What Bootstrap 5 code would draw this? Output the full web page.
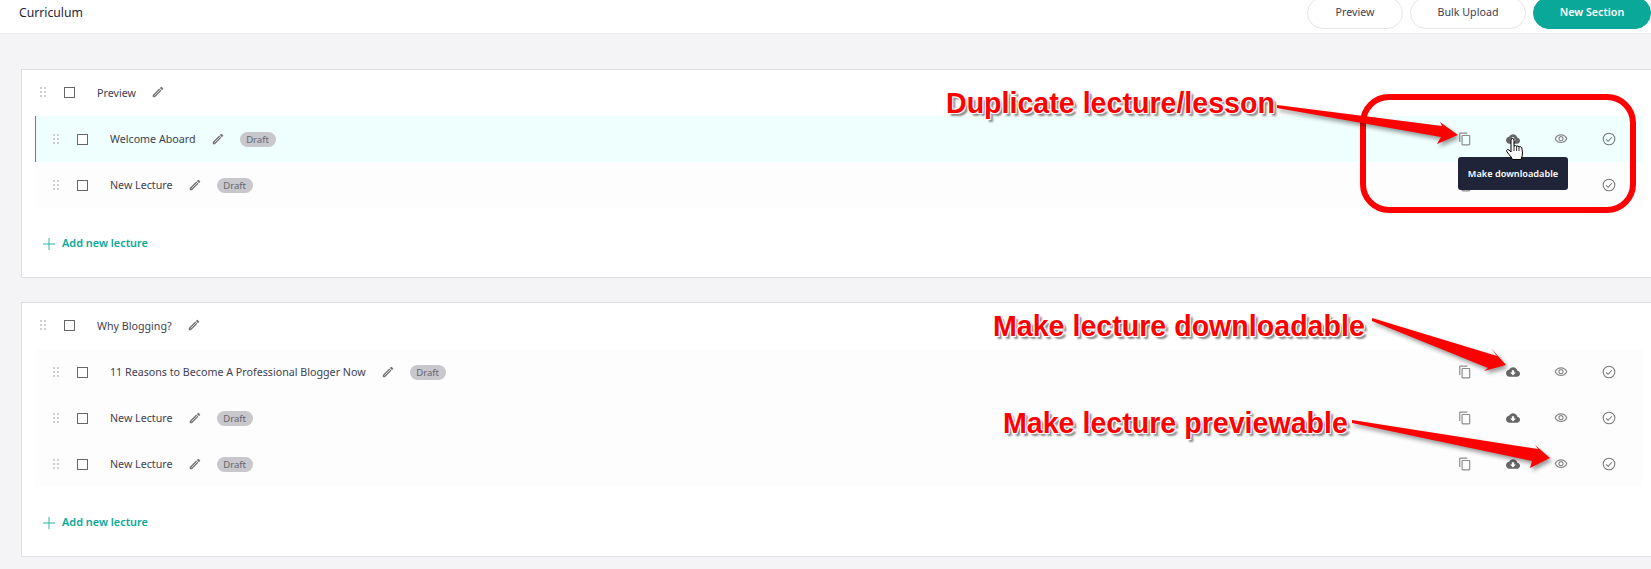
<!DOCTYPE html>
<html lang="en">
<head>
    <meta charset="UTF-8">
    <meta name="viewport" content="width=device-width, initial-scale=1.0">
    <title>Curriculum</title>
    <!-- Bootstrap CSS -->
    <link href="https://cdn.jsdelivr.net/npm/bootstrap@5.3.0/dist/css/bootstrap.min.css" rel="stylesheet">
    <style>
        html, body {
            height: 569px;
            overflow: hidden;
        }
        body {
            position: relative;
            background-color: #f4f4f6;
            font-family: "Noto Sans", "Open Sans", sans-serif;
            font-size: 10.7px;
            color: #3d4152;
        }
        .top-bar {
            height: 42px;
            margin-top: -8px;
            padding-left: 19px;
            background: #fff;
            border-bottom: 1px solid #ececee;
        }
        .top-title {
            font-size: 12.2px;
            color: #23263a;
            padding-top: 1px;
        }
        .top-btns {
            column-gap: 7px;
        }
        .top-btn {
            height: 32px;
            padding: 0;
            font-size: 10.7px;
            color: #3d4152;
            background: #fff;
            border: 1px solid #e8e6e8;
        }
        .btn-preview { width: 96px; }
        .btn-bulk { width: 116px; }
        .btn-section {
            width: 118px;
            font-weight: 600;
            color: #fff;
            background: #0aa899;
            border-color: #0aa899;
        }
        .curr-list {
            padding-top: 35px;
        }
        .curr-card {
            margin: 0 -6px 24px 21px;
            padding: 0 13px;
            border: 1px solid #dfdfe1;
            border-radius: 0;
            background: #fff;
        }
        .sec-head {
            height: 46px;
            padding: 0 0 2px 5px;
        }
        .sec-name {
            padding-top: 2px;
        }
        .lec-row {
            height: 46px;
            padding-left: 17px;
            background: #fdfdfd;
            border-left: 1px solid transparent;
        }
        .lec-row.is-active {
            background: #eefffd;
            border-left-color: #0aa899;
        }
        .grip {
            width: 6px;
            height: 10px;
            margin-right: 18px;
            flex: none;
        }
        .pick {
            width: 11px;
            height: 11px;
            margin: 0 22px 0 0;
            flex: none;
            border: 1px solid #666;
            border-radius: 0 !important;
            background-color: #fff;
        }
        .pen {
            width: 14px;
            height: 14px;
            margin-left: 15px;
            flex: none;
        }
        .draft-tag {
            width: 36px;
            height: 15px;
            margin-left: 15px;
            line-height: 15px;
            text-align: center;
            font-size: 9.5px;
            color: #65666f;
            background: #c7c7cc;
            border-radius: 8px;
        }
        .act-slot {
            width: 48px;
            height: 14px;
            position: relative;
            display: flex;
            justify-content: center;
            align-items: center;
        }
        .act-slot svg {
            width: 14px;
            height: 14px;
        }
        .act-wrap {
            margin-left: auto;
            padding-right: 10px;
        }
        .add-lec {
            height: 69px;
            padding: 2px 0 0 8px;
            font-size: 10.9px;
            font-weight: 600;
            color: #0aa899;
        }
        .add-lec svg {
            width: 12px;
            height: 12px;
            margin-right: 7px;
        }
        .dl-tip {
            position: absolute;
            top: 25px;
            left: -31px;
            width: 110px;
            height: 33px;
            line-height: 33px;
            text-align: center;
            font-size: 9.2px;
            font-weight: 600;
            color: #fff;
            background: #1f2438;
            border-radius: 3px;
            z-index: 5;
        }
        .hand {
            position: absolute;
            top: 6px;
            left: 17px;
            width: 17px !important;
            height: 22px !important;
            z-index: 6;
        }
        .note-layer {
            position: absolute;
            top: 0;
            left: 0;
            z-index: 8;
            filter: drop-shadow(2px 3px 2px rgba(0, 0, 0, .4));
        }
        .note-box {
            position: absolute;
            top: 0;
            left: 0;
            z-index: 7;
        }
        .note-text {
            position: absolute;
            z-index: 9;
            white-space: nowrap;
            font-family: "Liberation Sans", Arial, sans-serif;
            font-weight: 700;
            font-size: 28.6px;
            line-height: 30px;
            color: #f00;
            text-shadow: -1px -1px 0 #fff, 1px -1px 0 #fff, -1px 1px 0 #fff, 1px 1px 0 #fff, 3px 3px 2px #888;
        }
        .note-dup { top: 88px; left: 946px; }
        .note-dl { top: 311px; left: 993px; }
        .note-prev { top: 408px; left: 1003px; }
    </style>
</head>
<body>

<!-- Shared icons -->
<svg width="0" height="0" class="d-block position-absolute">
    <symbol id="i-grip" viewBox="0 0 6 10">
        <g fill="#cfcfd2">
            <rect x="0" y="0" width="2" height="2"/><rect x="4" y="0" width="2" height="2"/>
            <rect x="0" y="4" width="2" height="2"/><rect x="4" y="4" width="2" height="2"/>
            <rect x="0" y="8" width="2" height="2"/><rect x="4" y="8" width="2" height="2"/>
        </g>
    </symbol>
    <symbol id="i-pen" viewBox="0 0 24 24">
        <path d="M3 17.25V21h3.75L17.81 9.94l-3.75-3.75L3 17.25zM20.71 7.04a1 1 0 0 0 0-1.41l-2.34-2.34a1 1 0 0 0-1.41 0l-1.83 1.83 3.75 3.75 1.83-1.83z" fill="#777"/>
        <path d="M6 18 15.5 8.5" stroke="#ddd" stroke-width="1.6"/>
    </symbol>
    <symbol id="i-copy" viewBox="0 0 24 24">
        <path d="M16 1H4c-1.1 0-2 .9-2 2v14h2V3h12V1zm3 4H8c-1.1 0-2 .9-2 2v14c0 1.1.9 2 2 2h11c1.1 0 2-.9 2-2V7c0-1.1-.9-2-2-2zm0 16H8V7h11v14z" fill="#8c8c8c"/>
    </symbol>
    <symbol id="i-cloud" viewBox="0 0 24 24">
        <path d="M19.35 10.04C18.67 6.59 15.64 4 12 4 9.11 4 6.6 5.64 5.35 8.04 2.34 8.36 0 10.91 0 14c0 3.31 2.69 6 6 6h13c2.76 0 5-2.24 5-5 0-2.64-2.05-4.78-4.65-4.96zM17 13l-5 5-5-5h3V9h4v4h3z" fill="#666"/>
    </symbol>
    <symbol id="i-eye" viewBox="0 0 24 24">
        <path d="M12 6c3.79 0 7.17 2.13 8.82 5.5C19.17 14.87 15.79 17 12 17s-7.17-2.13-8.82-5.5C4.83 8.13 8.21 6 12 6m0-2C7 4 2.73 7.11 1 11.5 2.73 15.89 7 19 12 19s9.27-3.11 11-7.5C21.27 7.11 17 4 12 4zm0 5c1.38 0 2.5 1.12 2.5 2.5S13.38 14 12 14s-2.5-1.12-2.5-2.5S10.62 9 12 9m0-2c-2.48 0-4.5 2.02-4.5 4.5S9.52 16 12 16s4.5-2.02 4.5-4.5S14.48 7 12 7z" fill="#888"/>
    </symbol>
    <symbol id="i-check" viewBox="0 0 24 24">
        <circle cx="12" cy="12" r="10" fill="none" stroke="#777" stroke-width="1.8"/>
        <path d="M7 12.5l3.5 3.5L17 9" fill="none" stroke="#777" stroke-width="1.8"/>
    </symbol>
    <symbol id="i-plus" viewBox="0 0 12 12">
        <path d="M6 0v12M0 6h12" stroke="#2bb8ab" stroke-width="1"/>
    </symbol>
</svg>

<!-- Top bar -->
<div class="top-bar d-flex justify-content-between align-items-center">
    <div class="top-title">Curriculum</div>
    <div class="d-flex top-btns">
        <button class="btn rounded-pill top-btn btn-preview" type="button">Preview</button>
        <button class="btn rounded-pill top-btn btn-bulk" type="button">Bulk Upload</button>
        <button class="btn rounded-pill top-btn btn-section" type="button">New Section</button>
    </div>
</div>

<div class="curr-list">

    <!-- Section 1 -->
    <div class="card curr-card">
        <div class="sec-head d-flex align-items-center">
            <svg class="grip"><use href="#i-grip"/></svg>
            <input class="form-check-input pick" type="checkbox">
            <span class="sec-name">Preview</span>
            <svg class="pen"><use href="#i-pen"/></svg>
        </div>

        <div class="lec-row is-active d-flex align-items-center">
            <svg class="grip"><use href="#i-grip"/></svg>
            <input class="form-check-input pick" type="checkbox">
            <span>Welcome Aboard</span>
            <svg class="pen"><use href="#i-pen"/></svg>
            <span class="draft-tag">Draft</span>
            <div class="act-wrap d-flex">
                <div class="act-slot"><svg><use href="#i-copy"/></svg></div>
                <div class="act-slot">
                    <svg><use href="#i-cloud"/></svg>
                    <svg class="hand" viewBox="0 0 17 22">
                        <path d="M5 13V2.2Q5 .5 6.5 .5T8 2.2V8Q9.5 7 10.6 8.2 12 7.4 13 8.8 14.8 8.2 15.8 9.8L16.5 15Q16.5 18 15 21.5H6.5Q5.5 19 3 16.5L.8 13.5Q.2 12 1.5 11.5 3 11.2 5 14Z" fill="#fff" stroke="#000" stroke-width="1"/>
                        <path d="M8 8v5M10.6 8.2V13M13 8.8V13" stroke="#000" stroke-width=".8" fill="none"/>
                    </svg>
                    <div class="dl-tip">Make downloadable</div>
                </div>
                <div class="act-slot"><svg><use href="#i-eye"/></svg></div>
                <div class="act-slot"><svg><use href="#i-check"/></svg></div>
            </div>
        </div>

        <div class="lec-row d-flex align-items-center">
            <svg class="grip"><use href="#i-grip"/></svg>
            <input class="form-check-input pick" type="checkbox">
            <span>New Lecture</span>
            <svg class="pen"><use href="#i-pen"/></svg>
            <span class="draft-tag">Draft</span>
            <div class="act-wrap d-flex">
                <div class="act-slot"><svg><use href="#i-copy"/></svg></div>
                <div class="act-slot"><svg><use href="#i-cloud"/></svg></div>
                <div class="act-slot"><svg><use href="#i-eye"/></svg></div>
                <div class="act-slot"><svg><use href="#i-check"/></svg></div>
            </div>
        </div>

        <div class="add-lec d-flex align-items-center">
            <svg><use href="#i-plus"/></svg>
            <span>Add new lecture</span>
        </div>
    </div>

    <!-- Section 2 -->
    <div class="card curr-card">
        <div class="sec-head d-flex align-items-center">
            <svg class="grip"><use href="#i-grip"/></svg>
            <input class="form-check-input pick" type="checkbox">
            <span class="sec-name">Why Blogging?</span>
            <svg class="pen"><use href="#i-pen"/></svg>
        </div>

        <div class="lec-row d-flex align-items-center">
            <svg class="grip"><use href="#i-grip"/></svg>
            <input class="form-check-input pick" type="checkbox">
            <span>11 Reasons to Become A Professional Blogger Now</span>
            <svg class="pen"><use href="#i-pen"/></svg>
            <span class="draft-tag">Draft</span>
            <div class="act-wrap d-flex">
                <div class="act-slot"><svg><use href="#i-copy"/></svg></div>
                <div class="act-slot"><svg><use href="#i-cloud"/></svg></div>
                <div class="act-slot"><svg><use href="#i-eye"/></svg></div>
                <div class="act-slot"><svg><use href="#i-check"/></svg></div>
            </div>
        </div>

        <div class="lec-row d-flex align-items-center">
            <svg class="grip"><use href="#i-grip"/></svg>
            <input class="form-check-input pick" type="checkbox">
            <span>New Lecture</span>
            <svg class="pen"><use href="#i-pen"/></svg>
            <span class="draft-tag">Draft</span>
            <div class="act-wrap d-flex">
                <div class="act-slot"><svg><use href="#i-copy"/></svg></div>
                <div class="act-slot"><svg><use href="#i-cloud"/></svg></div>
                <div class="act-slot"><svg><use href="#i-eye"/></svg></div>
                <div class="act-slot"><svg><use href="#i-check"/></svg></div>
            </div>
        </div>

        <div class="lec-row d-flex align-items-center">
            <svg class="grip"><use href="#i-grip"/></svg>
            <input class="form-check-input pick" type="checkbox">
            <span>New Lecture</span>
            <svg class="pen"><use href="#i-pen"/></svg>
            <span class="draft-tag">Draft</span>
            <div class="act-wrap d-flex">
                <div class="act-slot"><svg><use href="#i-copy"/></svg></div>
                <div class="act-slot"><svg><use href="#i-cloud"/></svg></div>
                <div class="act-slot"><svg><use href="#i-eye"/></svg></div>
                <div class="act-slot"><svg><use href="#i-check"/></svg></div>
            </div>
        </div>

        <div class="add-lec d-flex align-items-center">
            <svg><use href="#i-plus"/></svg>
            <span>Add new lecture</span>
        </div>
    </div>
</div>

<!-- Red annotations drawn over the screenshot -->
<svg class="note-box" width="1651" height="569">
    <rect x="1363" y="97" width="270" height="113" rx="26" fill="none" stroke="#f00" stroke-width="6"/>
</svg>
<svg class="note-layer" width="1651" height="569">
    <polygon points="1277,105 1442,126 1440,122 1458,135 1437,144 1441,137 1277,108" fill="#f00"/>
    <polygon points="1372,318 1497,356 1491,348 1506,365 1484,371 1488,368 1372,321" fill="#f00"/>
    <polygon points="1352,420 1538,449 1535,445 1550,458 1530,468 1532,461 1352,423" fill="#f00"/>
</svg>
<div class="note-text note-dup">Duplicate lecture/lesson</div>
<div class="note-text note-dl">Make lecture downloadable</div>
<div class="note-text note-prev">Make lecture previewable</div>

<!-- Bootstrap JS -->
<script src="https://cdn.jsdelivr.net/npm/bootstrap@5.3.0/dist/js/bootstrap.bundle.min.js"></script>
</body>
</html>
